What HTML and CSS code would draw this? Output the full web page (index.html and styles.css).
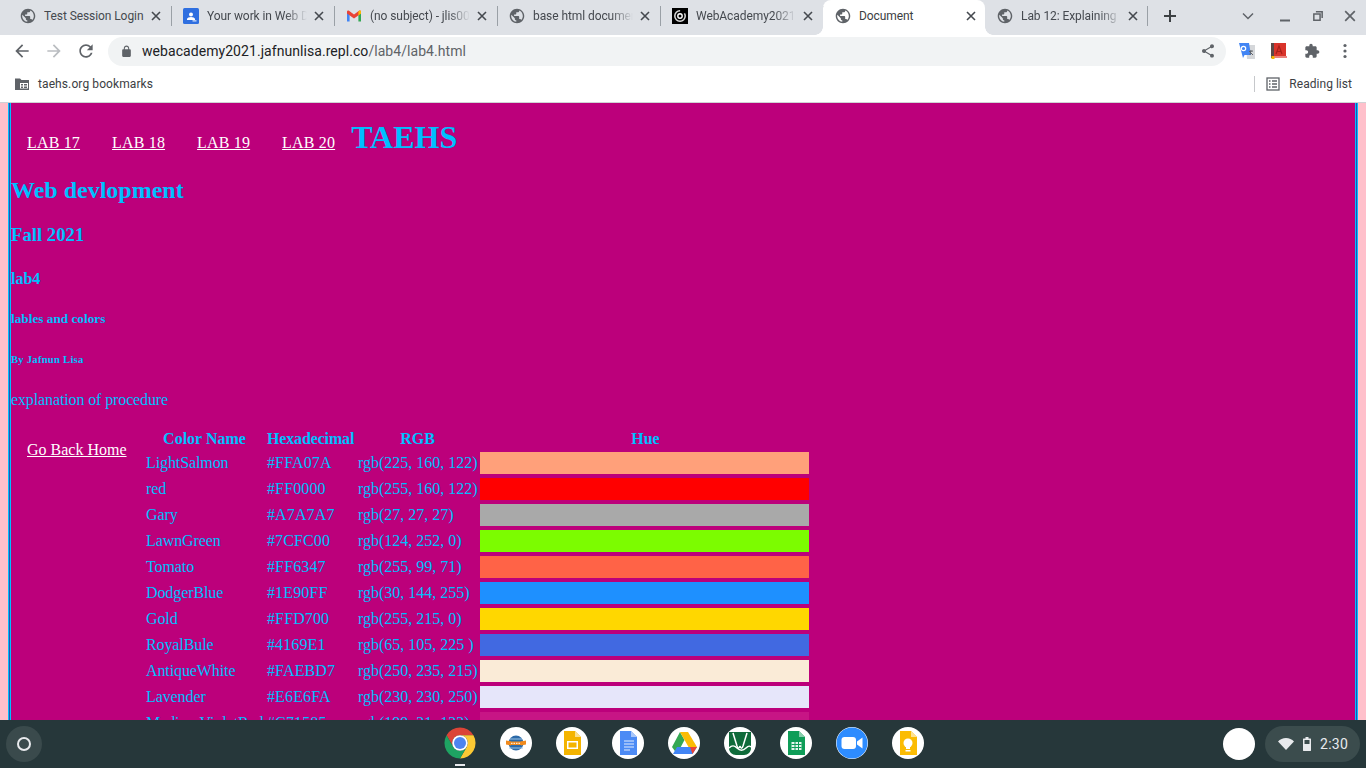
FILE: index.html
```html
<!DOCTYPE html>
<html lang="en">
<head>
<meta charset="utf-8">
<title>Document</title>
<link rel="stylesheet" href="styles.css">
</head>
<body>
<svg class="defs" aria-hidden="true">
  <symbol id="globe" viewBox="1 1 22 22"><path d="M12 2C6.48 2 2 6.48 2 12s4.48 10 10 10 10-4.48 10-10S17.52 2 12 2zm-1 17.93c-3.95-.49-7-3.85-7-7.93 0-.62.08-1.21.21-1.79L9 15v1c0 1.1.9 2 2 2v1.93zm6.9-2.54c-.26-.81-1-1.39-1.9-1.39h-1v-3c0-.55-.45-1-1-1H8v-2h2c.55 0 1-.45 1-1V7h2c1.1 0 2-.9 2-2v-.41c2.93 1.19 5 4.06 5 7.41 0 2.08-.8 3.97-2.1 5.39z"/></symbol>
  <symbol id="x" viewBox="0 0 10 10"><path d="M1 1l8 8M9 1l-8 8" fill="none" stroke="currentColor" stroke-width="1.6"/></symbol>
</svg>
<div class="screen">
  <header class="browser">
    <div class="tabstrip">
      <div class="tab sep"><svg class="fav grey"><use href="#globe"/></svg><span class="title">Test Session Login</span><svg class="close"><use href="#x"/></svg></div>
      <div class="tab sep"><svg class="fav" viewBox="0 0 16 16"><rect width="16" height="16" rx="1.5" fill="#2f6fe0"/><circle cx="8" cy="6.6" r="2" fill="#fff"/><path d="M4 12v-1c0-1.2 2.4-2 4-2s4 .8 4 2v1z" fill="#fff"/><rect x="9.5" y="12.4" width="4" height="1" fill="#fff"/></svg><span class="title fade">Your work in Web Dev</span><svg class="close"><use href="#x"/></svg></div>
      <div class="tab sep"><svg class="fav" viewBox="0 0 16 16"><path d="M1 3.5v10h2.6V7z" fill="#4285f4"/><path d="M15 3.5v10h-2.6V7z" fill="#34a853"/><path d="M1 3.8c0-1 1.2-1.6 2-1l5 3.8 5-3.8c.8-.6 2-.1 2 1L15 5.5 8 10.5 1 5.5z" fill="#ea4335"/><path d="M12.4 3.6l1-.8c.8-.6 1.6 0 1.6 1v1.7l-2.6 1.9z" fill="#fbbc04"/></svg><span class="title fade">(no subject) - jlis0001</span><svg class="close"><use href="#x"/></svg></div>
      <div class="tab sep"><svg class="fav grey"><use href="#globe"/></svg><span class="title fade">base html document</span><svg class="close"><use href="#x"/></svg></div>
      <div class="tab sep"><svg class="fav" viewBox="0 0 16 16"><rect width="16" height="16" fill="#000"/><circle cx="8" cy="8" r="5.200" fill="none" stroke="#ddd" stroke-width="1.500" stroke-dasharray="24 5"/><circle cx="8" cy="8" r="2.200" fill="none" stroke="#fff" stroke-width="1.400"/></svg><span class="title fade">WebAcademy2021</span><svg class="close"><use href="#x"/></svg></div>
      <div class="tab active"><svg class="fav grey"><use href="#globe"/></svg><span class="title">Document</span><svg class="close"><use href="#x"/></svg></div>
      <div class="tab narrow sep"><svg class="fav grey"><use href="#globe"/></svg><span class="title fade">Lab 12: Explaining</span><svg class="close"><use href="#x"/></svg></div>
      <div class="ctl plus"><svg width="14" height="14" viewBox="0 0 14 14"><path d="M7 1v12M1 7h12" fill="none" stroke="#3c4043" stroke-width="2"/></svg></div>
      <div class="ctl chevron"><svg width="12" height="8" viewBox="0 0 12 8"><path d="M1 1.500l5 5 5-5" fill="none" stroke="#5f6368" stroke-width="1.500"/></svg></div>
      <div class="ctl minimize"><svg width="12" height="12" viewBox="0 0 12 12"><path d="M1 10.500h10" stroke="#5f6368" stroke-width="2"/></svg></div>
      <div class="ctl"><svg width="10" height="10" viewBox="0 0 12 12"><path d="M3.500 1h7.500v7.500M1 3.500h7.500v7.500H1z" fill="none" stroke="#5f6368" stroke-width="1.800"/></svg></div>
      <div class="ctl"><svg width="12" height="12" viewBox="0 0 10 10"><path d="M1 1l8 8M9 1l-8 8" fill="none" stroke="#5f6368" stroke-width="1.400"/></svg></div>
    </div>
    <div class="toolbar">
      <div class="ctl"><svg class="i20" viewBox="0 0 24 24" fill="#5f6368"><path d="M20 11H7.830l5.590-5.590L12 4l-8 8 8 8 1.410-1.410L7.830 13H20v-2z"/></svg></div>
      <div class="ctl"><svg class="i20" viewBox="0 0 24 24" fill="#babdc1"><path d="M4 11h12.170l-5.590-5.590L12 4l8 8-8 8-1.410-1.410L16.170 13H4v-2z"/></svg></div>
      <div class="ctl"><svg class="i20" viewBox="0 0 24 24" fill="#5f6368"><path d="M17.650 6.350C16.200 4.900 14.210 4 12 4c-4.420 0-7.990 3.580-7.990 8s3.570 8 7.990 8c3.730 0 6.840-2.550 7.730-6h-2.080c-.82 2.330-3.040 4-5.650 4-3.310 0-6-2.690-6-6s2.690-6 6-6c1.660 0 3.140.69 4.220 1.780L13 11h7V4l-2.350 2.350z"/></svg></div>
      <div class="omnibox">
        <svg class="lock" viewBox="0 0 24 24" fill="#5f6368"><path d="M18 8h-1V6c0-2.760-2.240-5-5-5S7 3.240 7 6v2H6c-1.100 0-2 .9-2 2v10c0 1.100.9 2 2 2h12c1.100 0 2-.9 2-2V10c0-1.100-.9-2-2-2zM9 6c0-1.660 1.340-3 3-3s3 1.340 3 3v2H9V6z"/></svg>
        <span class="url">webacademy2021.jafnunlisa.repl.co<span class="path">/lab4/lab4.html</span></span>
        <svg class="share" viewBox="0 0 24 24" fill="#5f6368"><path d="M18 16.080c-.76 0-1.440.3-1.960.77L8.910 12.700c.05-.23.09-.46.09-.7s-.04-.47-.09-.7l7.050-4.110c.54.5 1.250.81 2.040.81 1.660 0 3-1.340 3-3s-1.340-3-3-3-3 1.340-3 3c0 .24.04.47.09.7L8.040 9.810C7.500 9.310 6.790 9 6 9c-1.660 0-3 1.340-3 3s1.340 3 3 3c.79 0 1.500-.31 2.040-.81l7.120 4.160c-.05.21-.08.43-.08.65 0 1.610 1.310 2.920 2.920 2.920s2.920-1.310 2.920-2.920-1.310-2.920-2.920-2.920z"/></svg>
      </div>
      <div class="ctl first-ext"><svg class="i18" viewBox="0 0 18 18"><path d="M8 3h9v14H9z" fill="#d5d7da"/><path d="M1 1h10l2 12H6.500L5 16z" fill="#4285f4"/><circle cx="5.500" cy="6.500" r="2.200" fill="none" stroke="#fff" stroke-width="1.200"/><path d="M11 9.500l4-.5M13 8l-1 5M12 10l3 3" stroke="#5f6368" stroke-width="1" fill="none"/></svg></div>
      <div class="ctl"><svg class="i18" viewBox="0 0 18 18"><rect x="1" y="1" width="15" height="13" fill="#d9342b"/><rect x="1" y="1" width="3" height="15" fill="#5b4a48"/><path d="M6 12l3-8 3 8M7.500 9.500h3" fill="none" stroke="#a8201a" stroke-width="1.200"/><path d="M4 15h13" stroke="#e25a52" stroke-width="1.500"/><rect x="1.500" y="14" width="3" height="3" fill="#f4b400"/></svg></div>
      <div class="ctl wide"><svg class="i16" viewBox="0 0 24 24" fill="#5f6368"><path d="M20.500 11H19V7c0-1.100-.9-2-2-2h-4V3.500C13 2.120 11.880 1 10.500 1S8 2.120 8 3.500V5H4c-1.100 0-1.990.9-1.990 2v3.800H3.500c1.490 0 2.700 1.210 2.700 2.700s-1.210 2.700-2.700 2.700H2V20c0 1.100.9 2 2 2h3.800v-1.500c0-1.490 1.210-2.700 2.700-2.700 1.490 0 2.700 1.210 2.700 2.700V22H17c1.100 0 2-.9 2-2v-4h1.500c1.380 0 2.500-1.120 2.500-2.500S21.880 11 20.500 11z"/></svg></div>
      <div class="ctl"><svg class="i18" viewBox="0 0 18 18" fill="#5f6368"><circle cx="9" cy="3.500" r="1.600"/><circle cx="9" cy="9" r="1.600"/><circle cx="9" cy="14.500" r="1.600"/></svg></div>
    </div>
    <div class="bookmarks">
      <svg class="folder" viewBox="0 0 16 16"><path d="M1 2.500h5l1.500 1.500H15v10H1z" fill="#5f6368"/><path d="M6 7h8v5.500H6z" fill="#fff"/><path d="M7 8h2v1.500H7zM10 8h3v1.500h-3zM7 10.500h2V12H7zM10 10.500h3V12h-3z" fill="#5f6368"/></svg>
      <span class="bm-label">taehs.org bookmarks</span>
      <span class="bm-sep"></span>
      <svg class="reading" viewBox="0 0 14 14"><rect x="1" y="1" width="12" height="12" fill="none" stroke="#5f6368" stroke-width="1.300"/><path d="M3 4h1.500M6 4h5M3 7h1.500M6 7h5M3 10h1.500M6 10h5" stroke="#5f6368" stroke-width="1.300"/></svg>
      <span class="bm-read">Reading list</span>
    </div>
  </header>

  <main class="viewport">
    <div class="sheet">
      <div class="topline">
        <ul class="topnav">
          <li><a href="#">LAB 17</a></li>
          <li><a href="#">LAB 18</a></li>
          <li><a href="#">LAB 19</a></li>
          <li><a href="#">LAB 20</a></li>
        </ul>
        <h1>TAEHS</h1>
      </div>
      <h2>Web devlopment</h2>
      <h3>Fall 2021</h3>
      <h4>lab4</h4>
      <h5>lables and colors</h5>
      <h6>By Jafnun Lisa</h6>
      <p>explanation of procedure</p>
      <div class="content">
        <ul class="sidenav"><li><a href="#">Go Back Home</a></li></ul>
        <table>
          <colgroup><col class="col-name"><col class="col-hex"><col class="col-rgb"><col class="col-hue"></colgroup>
          <thead>
            <tr><th>Color Name</th><th class="tight">Hexadecimal</th><th>RGB</th><th class="hue-head">Hue</th></tr>
          </thead>
          <tbody>
            <tr><td class="name">LightSalmon</td><td class="hex">#FFA07A</td><td>rgb(225, 160, 122)</td><td class="c-salmon"></td></tr>
            <tr><td class="name">red</td><td class="hex">#FF0000</td><td>rgb(255, 160, 122)</td><td class="c-red"></td></tr>
            <tr><td class="name">Gary</td><td class="hex">#A7A7A7</td><td>rgb(27, 27, 27)</td><td class="c-gray"></td></tr>
            <tr><td class="name">LawnGreen</td><td class="hex">#7CFC00</td><td>rgb(124, 252, 0)</td><td class="c-lawn"></td></tr>
            <tr><td class="name">Tomato</td><td class="hex">#FF6347</td><td>rgb(255, 99, 71)</td><td class="c-tomato"></td></tr>
            <tr><td class="name">DodgerBlue</td><td class="hex">#1E90FF</td><td>rgb(30, 144, 255)</td><td class="c-dodger"></td></tr>
            <tr><td class="name">Gold</td><td class="hex">#FFD700</td><td>rgb(255, 215, 0)</td><td class="c-gold"></td></tr>
            <tr><td class="name">RoyalBule</td><td class="hex">#4169E1</td><td>rgb(65, 105, 225 )</td><td class="c-royal"></td></tr>
            <tr><td class="name">AntiqueWhite</td><td class="hex">#FAEBD7</td><td>rgb(250, 235, 215)</td><td class="c-antique"></td></tr>
            <tr><td class="name">Lavender</td><td class="hex">#E6E6FA</td><td>rgb(230, 230, 250)</td><td class="c-lavender"></td></tr>
            <tr><td class="name">MediumVioletRed</td><td class="hex">#C71585</td><td>rgb(199, 21, 133)</td><td class="c-violet"></td></tr>
          </tbody>
        </table>
      </div>
    </div>
  </main>

  <footer class="shelf">
    <div class="launcher"><span class="ring"></span></div>
    <div class="apps">
      <div class="app-wrap"><svg class="chrome" viewBox="0 0 48 48"><path d="M5 13A22 22 0 0 1 43 13H24A11 11 0 0 0 14.500 29.500Z" fill="#db4437"/><path d="M43 13A22 22 0 0 1 24 46L33.500 29.500A11 11 0 0 0 24 13Z" fill="#fcc934"/><path d="M24 46A22 22 0 0 1 5 13L14.500 29.500A11 11 0 0 0 33.500 29.500Z" fill="#1ea362"/><circle cx="24" cy="24" r="11" fill="#fff"/><circle cx="24" cy="24" r="8.500" fill="#4d84f0"/></svg><span class="running"></span></div>
      <div class="app"><svg viewBox="0 0 32 32"><circle cx="16" cy="16" r="7.500" fill="#2c6aa8"/><path d="M10 12h12M9 21h14" stroke="#9cc4e4" stroke-width="1"/><path d="M6 13.500l5 1v4l-5-1zM26 13.500l-5 1v4l5-1z" fill="#f08a1d"/><rect x="9" y="14.500" width="14" height="3.500" fill="#f08a1d"/><path d="M11 16.300h10" stroke="#fff" stroke-width="1" stroke-dasharray="1.500 1"/></svg></div>
      <div class="app"><svg viewBox="0 0 32 32"><path d="M8 4h11l6 6v18H8z" fill="#f4b400"/><path d="M19 4l6 6h-6z" fill="#fadf8f"/><rect x="11" y="14" width="11" height="8" fill="#fff"/><rect x="12.500" y="15.500" width="8" height="5" fill="#f4b400"/></svg></div>
      <div class="app"><svg viewBox="0 0 32 32"><path d="M8 4h11l6 6v18H8z" fill="#4c8bf5"/><path d="M19 4l6 6h-6z" fill="#a9c7fa"/><path d="M12 14h10M12 17h10M12 20h10M12 23h6" stroke="#e4edfd" stroke-width="1.200"/></svg></div>
      <div class="app"><svg viewBox="0 0 32 32"><path d="M12 5L16.500 13 9 27 4 20z" fill="#34a853"/><path d="M12 5h8l9 15h-8.500z" fill="#fbbc04"/><path d="M9 20h20l-4.500 7H5z" fill="#4285f4"/><path d="M22 20h7l-4.500 7z" fill="#ea4335"/></svg></div>
      <div class="app"><svg viewBox="0 0 32 32"><path d="M5 5h22v16c0 4-3 7-7 7h-8c-4 0-7-3-7-7z" fill="#0f6b3a"/><path d="M9 6l4 13c1 3 2 3 3 0M23 6l-4 13c-1 3-2 3-3 0" fill="none" stroke="#fff" stroke-width="1.500"/><path d="M5 21c3-3 5-3 8 0s6 3 9 0 4-2 5-1" fill="none" stroke="#fff" stroke-width="1.500"/></svg></div>
      <div class="app"><svg viewBox="0 0 32 32"><path d="M8 4h11l6 6v18H8z" fill="#0f9d58"/><path d="M19 4l6 6h-6z" fill="#87ceac"/><path d="M11.500 15h10v8h-10z" fill="#e7f5ee"/><path d="M11.500 17.500h10M11.500 20.500h10M15 15v8M18.500 15v8" stroke="#0f9d58" stroke-width="1"/></svg></div>
      <div class="app"><svg viewBox="0 0 32 32"><circle cx="16" cy="16" r="15.500" fill="#2d8cff"/><rect x="5.500" y="10" width="14.500" height="12" rx="3" fill="#fff"/><path d="M21 14.500l5.500-4v11l-5.500-4z" fill="#fff"/></svg></div>
      <div class="app"><svg viewBox="0 0 32 32"><path d="M8 4h11l6 6v18H8z" fill="#fbbc04"/><path d="M19 4l6 6h-6z" fill="#fde293"/><circle cx="16" cy="16" r="4.500" fill="#fff"/><rect x="14" y="19" width="4" height="3" fill="#fff"/><rect x="13.500" y="23" width="5" height="1.500" fill="#fff"/></svg></div>
    </div>
    <div class="status">
      <span class="avatar"></span>
      <div class="tray">
        <svg class="wifi" viewBox="0 0 16 12"><path d="M8 12L0 3.500C2 1.500 4.800 0 8 0s6 1.500 8 3.500z" fill="#e8eaed"/></svg>
        <svg class="battery" viewBox="0 0 8 14"><path d="M2.500 0h3v1.500H7.500c.3 0 .5.200.5.500v11.500c0 .3-.2.500-.5.500h-7c-.3 0-.5-.2-.5-.5V2c0-.3.200-.5.500-.5h2z" fill="#e8eaed"/><rect x="1.500" y="3" width="5" height="4" fill="#3b4c4d"/></svg>
        <span class="clock">2:30</span>
      </div>
    </div>
  </footer>
</div>
</body>
</html>
```

FILE: styles.css
```css
* { box-sizing: border-box; }
html, body { margin: 0; height: 100%; overflow: hidden; }
body { font-family: "Liberation Serif", serif; }
.defs { display: none; }
.screen { height: 768px; display: flex; flex-direction: column; }

/* browser chrome */
.browser { font-family: Roboto, sans-serif; font-size: 12px; background: #fff; }
.tabstrip { height: 35px; background: #dee1e6; display: flex; padding-left: 8px; }
.tab { position: relative; flex: none; width: 163px; height: 35px; padding: 0 0 4px 12px; display: flex; align-items: center; color: #45494f; }
.tab.narrow { width: 162px; }
.tab.sep::after { content: ""; position: absolute; right: -1px; top: 6px; width: 1px; height: 20px; background: #9aa0a6; }
.tab.active { width: 162px; background: #fff; border-radius: 8px 8px 0 0; color: #3c4043; }
.tab.active::before { content: ""; position: absolute; left: -8px; bottom: 0; width: 8px; height: 8px; background: radial-gradient(circle at 0 0, #dee1e6 7.5px, #fff 8px); }
.tab.active::after { content: ""; position: absolute; right: -8px; bottom: 0; width: 8px; height: 8px; background: radial-gradient(circle at 100% 0, #dee1e6 7.5px, #fff 8px); }
.fav { flex: none; width: 16px; height: 16px; margin-right: 8px; }
.fav.grey { fill: #5f6368; }
.title { flex: none; width: 100px; white-space: nowrap; overflow: hidden; letter-spacing: -.08px; }
.title.fade { -webkit-mask-image: linear-gradient(90deg, #000 78%, transparent 100%); mask-image: linear-gradient(90deg, #000 78%, transparent 100%); }
.close { flex: none; width: 10px; height: 10px; margin-left: 7px; color: #45494f; }
.ctl { flex: none; width: 32px; height: 32px; display: flex; align-items: center; justify-content: center; }
.tabstrip .ctl { height: 35px; padding-bottom: 3px; }
.ctl.plus { width: 46px; }
.ctl.chevron { margin-left: 39px; }
.ctl.minimize { width: 34px; margin-left: 4px; }
.ctl.wide { width: 34px; }
.i16 { width: 16px; height: 16px; }
.i18 { width: 18px; height: 18px; }
.i20 { width: 20px; height: 20px; }

.toolbar { height: 32px; display: flex; padding-left: 6px; background: #fff; }
.omnibox { flex: none; width: 1118px; height: 29px; margin: 2px 0 0 6px; border-radius: 15px; background: #f1f3f4; display: flex; align-items: center; padding: 0 10px 1px; }
.lock { width: 13px; height: 13px; margin: 0 9px 0 2px; }
.url { font-size: 14px; letter-spacing: .06px; color: #202124; }
.path { color: #5f6368; }
.share { width: 16px; height: 16px; margin-left: auto; }
.first-ext { margin-left: 5px; }

.bookmarks { height: 36px; display: flex; align-items: center; padding: 0 0 2px 14px; border-bottom: 1px solid #d0d2d5; color: #3c4043; }
.folder { width: 16px; height: 16px; margin-right: 8px; }
.bm-sep { width: 1px; height: 16px; background: #c6c8cb; margin-left: auto; }
.bm-label { flex: none; letter-spacing: .1px; }
.reading { width: 14px; height: 14px; margin: 0 9px 0 11px; }
.bm-read { margin-right: 14px; letter-spacing: .03px; }

/* page */
.viewport { flex: 1; min-height: 0; overflow: hidden; background: #ffc0cb; padding: 0 8px; }
.sheet {
  height: 900px;
  padding: 0 3px;
  color: #00bfff;
  background:
    linear-gradient(#00bfff, #00bfff) 0 0 / 1px 100% no-repeat,
    linear-gradient(#2a50b0, #2a50b0) 1px 0 / 1px 100% no-repeat,
    linear-gradient(#00bfff, #00bfff) 2px 0 / 1px 100% no-repeat,
    linear-gradient(#00bfff, #00bfff) 100% 0 / 1px 100% no-repeat,
    linear-gradient(#2a50b0, #2a50b0) calc(100% - 1px) 0 / 1px 100% no-repeat,
    linear-gradient(#00bfff, #00bfff) calc(100% - 2px) 0 / 1px 100% no-repeat,
    #bc007b;
}
.topline { display: flex; align-items: baseline; padding-top: 16px; }
.topnav { display: flex; list-style: none; margin: 0; padding: 0; }
.topnav li { padding: 0 16px; letter-spacing: .17px; }
a { color: #fff; }
h1 { margin: 0; font-size: 32px; }
h2 { margin: 20.92px 0 19.92px; }
h4 { margin: 24.28px 0 21.28px; }
h5 { margin: 23.18px 0 22.18px; }
h6 { margin: 25.98px 0 25.98px; letter-spacing: .2px; }
p { margin: 0 0 17px; letter-spacing: -.12px; }
.content { display: flex; align-items: flex-start; }
.sidenav { flex: none; width: 132px; list-style: none; margin: 0; padding: 15px 0 0 16px; white-space: nowrap; }
table { flex: none; width: 668px; table-layout: fixed; border-collapse: separate; border-spacing: 2px 4px; }
.col-name { width: 119px; }
.col-hex { width: 89px; }
.col-rgb { width: 121px; }
.col-hue { width: 329px; }
th { padding: 0 1px; white-space: nowrap; }
.tight { letter-spacing: -.15px; }
.hue-head { padding-left: 3px; }
td { padding: 2px 1px; white-space: nowrap; overflow: hidden; }
.name { letter-spacing: -.1px; }
.hex { letter-spacing: .12px; }
.c-salmon { background: #ffa07a; }
.c-red { background: #f00; }
.c-gray { background: #a9a9a9; }
.c-lawn { background: #7cfc00; }
.c-tomato { background: #ff6347; }
.c-dodger { background: #1e90ff; }
.c-gold { background: #ffd700; }
.c-royal { background: #4169e1; }
.c-antique { background: #faebd7; }
.c-lavender { background: #e6e6fa; }
.c-violet { background: #c71585; }

/* shelf */
.shelf { flex: none; height: 48px; background: #26373a; display: flex; align-items: center; font-family: Roboto, sans-serif; }
.launcher { width: 36px; height: 36px; margin-left: 6px; border-radius: 50%; background: #3a4a4c; display: flex; align-items: center; justify-content: center; }
.ring { width: 14px; height: 14px; border: 2px solid #e8eaed; border-radius: 50%; }
.apps { display: flex; gap: 24px; margin-left: 402px; margin-top: -2px; }
.app-wrap { position: relative; width: 32px; height: 32px; display: flex; align-items: center; justify-content: center; }
.chrome { width: 34px; height: 34px; flex: none; }
.running { position: absolute; left: 11px; bottom: -7px; width: 10px; height: 2px; background: #e8eaed; }
.app { width: 32px; height: 32px; border-radius: 50%; background: #fff; display: flex; }
.app svg { width: 32px; height: 32px; }
.status { margin-left: auto; display: flex; align-items: center; margin-right: 6px; }
.avatar { width: 32px; height: 32px; border-radius: 50%; background: #fff; margin-right: 10px; }
.tray { width: 95px; height: 36px; border-radius: 18px; background: #3b4c4d; display: flex; align-items: center; padding-left: 13px; color: #e8eaed; }
.wifi { width: 16px; height: 12px; margin-right: 9px; }
.battery { width: 8px; height: 14px; margin-right: 9px; }
.clock { font-size: 14px; letter-spacing: .3px; }
```
